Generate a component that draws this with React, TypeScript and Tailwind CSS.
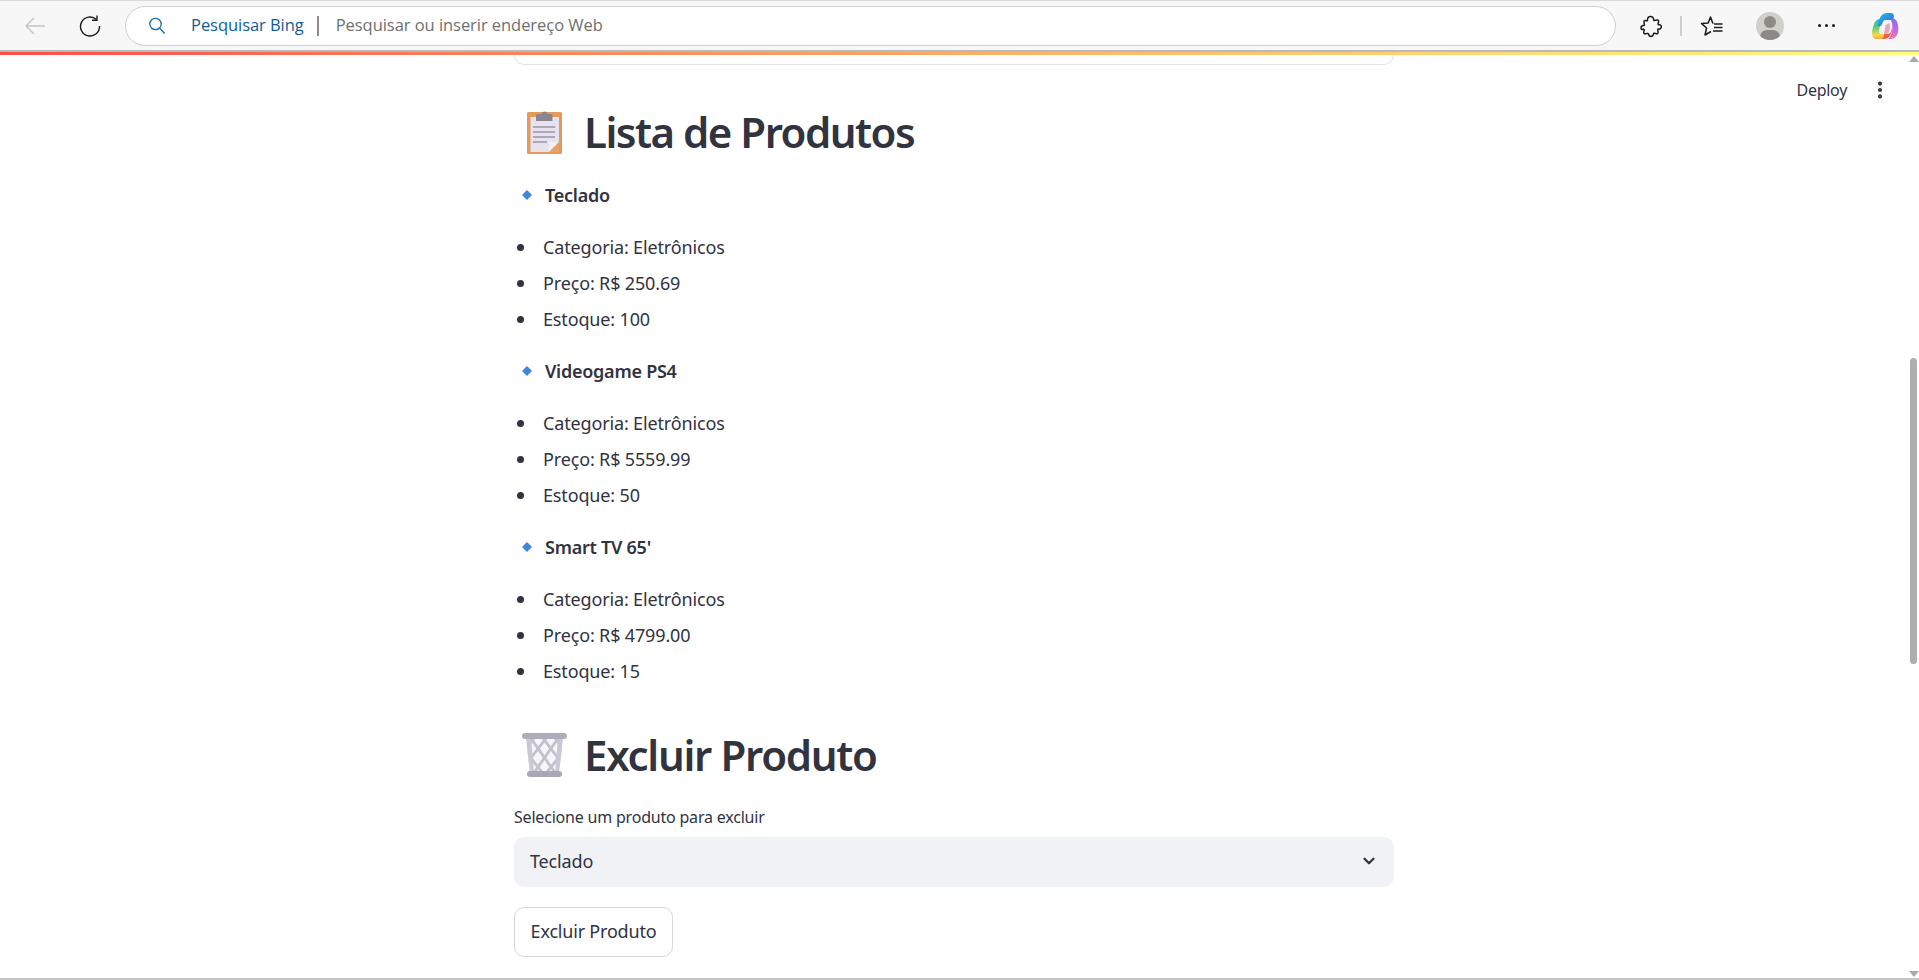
import { ChevronDown, EllipsisVertical } from "lucide-react";

const products = [
  { name: "Teclado", price: "250.69", stock: 100 },
  { name: "Videogame PS4", price: "5559.99", stock: 50 },
  { name: "Smart TV 65'", price: "4799.00", stock: 15 },
];

function BrowserBar() {
  return (
    <div className="flex h-[52px] shrink-0 items-center border-t border-b-2 border-t-[#d9d9d9] border-b-[#b9b9b9] bg-[#f7f7f7] font-['Open_Sans',sans-serif]">
      {/* back + reload */}
      <svg viewBox="0 0 24 24" className="ml-[23px] h-[24px] w-[24px] text-[#c4c4c4]" fill="none" stroke="currentColor" strokeWidth="1.3">
        <path d="M22 12H3M11 4l-8 8 8 8" />
      </svg>
      <svg viewBox="0 0 24 24" className="ml-[31px] h-[24px] w-[24px] text-[#1b1b1b]" fill="none" stroke="currentColor" strokeWidth="1.4">
        <path d="M18.500 5.600A9.500 9.500 0 1 0 21.500 12" />
        <path d="M19 1.500v4.700h-5" />
      </svg>
      {/* address bar */}
      <div className="ml-[23px] flex h-[40px] w-[1491px] items-center rounded-[20px] border border-[#cfcfcf] bg-white">
        <svg viewBox="0 0 20 20" className="ml-[21px] h-[20px] w-[20px] text-[#1c6aa5]" fill="none" stroke="currentColor" strokeWidth="1.3">
          <circle cx="8.500" cy="8" r="5.700" />
          <path d="M12.700 12.200l5 5.300" />
        </svg>
        <span className="ml-[24px] text-[16.5px] tracking-[-0.05px] text-[#0f5c99]">Pesquisar Bing</span>
        <span className="ml-[13px] h-[20px] w-[2px] bg-[#8a8a8a]" />
        <span className="ml-[17px] text-[16.5px] tracking-[-0.05px] text-[#6f6f6f]">Pesquisar ou inserir endereço Web</span>
      </div>
      {/* extensions */}
      <svg viewBox="0 0 24 24" className="ml-[23px] h-[24px] w-[24px] text-[#1b1b1b]" fill="none" stroke="currentColor" strokeWidth="1.500" strokeLinejoin="round">
        <path d="M8.500 6.200C8.200 4 9.600 2.500 11.500 2.500c2 0 3.300 1.400 3.100 3.200-.1.600.3.900.8.800l2.600-.5c1.100-.2 1.800.6 1.600 1.600l-.5 2.300c-.1.600.4 1 .9.900 1.500-.2 2.400.8 2.300 2.100-.1 1.400-1.300 2.300-2.600 2-.7-.1-1.100.3-1 .9l.4 2.400c.2 1-.6 1.700-1.500 1.500l-2.100-.4c-.6-.1-1 .3-1.100.8-.3 1.500-1.300 2.300-2.400 2.300-1.200 0-2.200-.9-2.400-2.200-.1-.6-.6-.9-1.100-.8l-2.200.4c-1 .2-1.700-.6-1.500-1.500l.4-2.200c.1-.6-.3-1-.8-1.100C2.900 16.300 2 15.300 2 14c0-1.400 1-2.400 2.500-2.400.6 0 1-.4.900-1l-.4-2.600c-.2-1 .6-1.700 1.500-1.500l1.300.4c.4.100.7-.2.700-.700z" />
      </svg>
      <span className="ml-[17px] h-[20px] w-[2px] bg-[#cfcfcf]" />
      {/* favourites */}
      <svg viewBox="0 0 24 24" className="ml-[18px] h-[24px] w-[24px] text-[#1b1b1b]" fill="none" stroke="currentColor" strokeWidth="1.500" strokeLinejoin="round">
        <path d="M13.500 9h-.8L10.500 3 8.200 9l-6.600.6 5 4.400L5 21l6-3.500" />
        <path d="M14 10h8.500M14 13.500h8.500M13 17h9.500" />
      </svg>
      {/* profile */}
      <div className="relative ml-[32px] h-[28px] w-[28px] overflow-hidden rounded-full bg-[#d0cfcb]">
        <div className="absolute left-[8px] top-[4px] h-[12px] w-[12px] rounded-full bg-[#8d8a85]" />
        <div className="absolute left-[4px] top-[18px] h-[14px] w-[20px] rounded-full bg-[#8d8a85]" />
      </div>
      <div className="ml-[34px] flex gap-[4px]">
        <span className="h-[3px] w-[3px] rounded-full bg-[#1b1b1b]" />
        <span className="h-[3px] w-[3px] rounded-full bg-[#1b1b1b]" />
        <span className="h-[3px] w-[3px] rounded-full bg-[#1b1b1b]" />
      </div>
      {/* copilot */}
      <svg viewBox="0 0 28 28" className="ml-[36px] h-[28px] w-[28px]">
        <defs>
          <linearGradient id="copA" x1="0" y1="0" x2="1" y2="1">
            <stop offset="0" stopColor="#20c4d8" />
            <stop offset="0.6" stopColor="#2b86ec" />
            <stop offset="1" stopColor="#3a55d8" />
          </linearGradient>
          <linearGradient id="copB" x1="0" y1="0" x2="0" y2="1">
            <stop offset="0" stopColor="#2bb8c8" />
            <stop offset="0.4" stopColor="#58cf78" />
            <stop offset="0.8" stopColor="#f6d84a" />
            <stop offset="1" stopColor="#f8a840" />
          </linearGradient>
          <linearGradient id="copC" x1="0" y1="0" x2="0" y2="1">
            <stop offset="0" stopColor="#8f6cf0" />
            <stop offset="0.6" stopColor="#c868e0" />
            <stop offset="1" stopColor="#f07ab0" />
          </linearGradient>
          <linearGradient id="copD" x1="0" y1="0" x2="1" y2="1">
            <stop offset="0" stopColor="#f8a83c" />
            <stop offset="0.6" stopColor="#f0603c" />
            <stop offset="1" stopColor="#e84a78" />
          </linearGradient>
        </defs>
        <path d="M3 12C4 9 6 7 9 7h2L8 18c-.5 2 .5 4 2 4h5c-1.500 3-3.500 5-7 5H6c-3 0-5-2-5-6 0-3 1-6 2-9z" fill="url(#copB)" />
        <path d="M20 6c4 0 6 2 7 7 1 5 0 14-7 14h-3c2-2 3-4 4-8 1-5 0-10-2.500-13z" fill="url(#copC)" />
        <path d="M8 9c1-5 4-8 8-8h4c2 0 3 1.500 3 4l-2 3h-6c-2 0-3 1-3.500 3L10 14H6.500z" fill="url(#copA)" />
        <path d="M13 22h4c2 0 3-2 3.500-5l.5-1c0 6-3 11-8 11h-3c2-1 3-2.500 3-5z" fill="url(#copD)" />
        <path d="M18.500 11l-4 2-1.500 9h3c2-1 3-4 3-7z" fill="#f2a0c0" />
      </svg>
      <div className="flex-1" />
    </div>
  );
}

function ClipboardEmoji() {
  return (
    <svg viewBox="0 0 35 43" className="h-[43px] w-[35px]">
      <rect x="0" y="1" width="35" height="42" rx="1.500" fill="#e39a5c" />
      <path d="M3.500 6H32v25L22 41H3.500z" fill="#e7e2f1" />
      <path d="M22 41l10-10h-10z" fill="#f3eff8" />
      <path d="M32 31v10H22z" fill="#e8a266" />
      <path d="M9 10V4.500C9 3.500 10 3 11 3h3.500c.5-3.500 5.500-3.500 6 0H24c1 0 1.500.5 1.500 1.500V10z" fill="#8b8590" />
      <path d="M6 16h22M6 21h22M6 26h22M6 31h14" stroke="#9a95a3" strokeWidth="1.500" />
    </svg>
  );
}

function TrashEmoji() {
  return (
    <svg viewBox="0 0 45 44" className="h-[44px] w-[45px]">
      <defs>
        <clipPath id="basket">
          <path d="M4 5h37l-4 35H8z" />
        </clipPath>
      </defs>
      <path d="M4 5h37l-4 35H8z" fill="#f6f5f9" />
      <g clipPath="url(#basket)" stroke="#c4c1cf" strokeWidth="2.800">
        <path d="M0 14L24 44M8 4L36 44M20 4L46 38M32 4L46 22" />
        <path d="M45 14L21 44M37 4L9 44M25 4L-1 38M13 4L-1 22" />
      </g>
      <path d="M4 5h5l3 35H8zM41 5h-5l-3 35h4z" fill="#cbc8d5" />
      <rect x="0" y="0" width="45" height="6" rx="3" fill="#b0adbb" />
      <rect x="5" y="38" width="35" height="6" rx="3" fill="#aaa6b8" />
    </svg>
  );
}

function Product({ name, price, stock }: { name: string; price: string; stock: number }) {
  return (
    <div className="mt-[16px]">
      <div className="flex h-[36px] items-center font-semibold tracking-[-0.25px]">
        <svg viewBox="0 0 10 10" className="ml-[8px] h-[10px] w-[10px]">
          <path d="M5 0l5 5-5 5-5-5z" fill="#3f86e0" />
        </svg>
        <span className="ml-[13px]">{name}</span>
      </div>
      <ul className="mt-[16px]">
        {[`Categoria: Eletrônicos`, `Preço: R$ ${price}`, `Estoque: ${stock}`].map((line) => (
          <li key={line} className="flex h-[36px] items-center">
            <span className="ml-[3px] h-[7px] w-[7px] rounded-full bg-[#31333f]" />
            <span className="ml-[19px]">{line}</span>
          </li>
        ))}
      </ul>
    </div>
  );
}

export default function App() {
  return (
    <div className="flex h-[980px] flex-col overflow-hidden bg-white font-['Noto_Sans',sans-serif] text-[18px] tracking-[-0.15px] text-[#31333f]">
      <BrowserBar />
      <div className="h-[3px] shrink-0 bg-linear-to-r from-[#ff4b4b] to-[#fffd80]" />

      <div className="relative flex min-h-0 flex-1 border-b-2 border-b-[#c4c4c4]">
        <main className="flex-1">
          <div className="mx-auto w-[880px]">
            <div className="h-[10px] rounded-b-[10px] border border-t-0 border-[#e4e4e4]" />

            <div className="mt-[37px] flex h-[60px] items-center gap-[22px] pl-[13px] text-[42px] font-semibold tracking-[-1.5px]">
              <ClipboardEmoji />
              <h2 className="-mt-[2px]">Lista de Produtos</h2>
            </div>

            <div className="-mt-[1px]">
              {products.map((p) => (
                <Product key={p.name} {...p} />
              ))}
            </div>

            <div className="mt-[36px] flex h-[60px] items-center gap-[17px] pl-[8px] text-[42px] font-semibold tracking-[-1.3px]">
              <TrashEmoji />
              <h2 className="-mt-[2px]">Excluir Produto</h2>
            </div>

            <label className="mt-[20px] block h-[24px] text-[16px] leading-[24px] tracking-[-0.2px]">Selecione um produto para excluir</label>
            <div className="mt-[8px] flex h-[50px] items-center justify-between rounded-[10px] bg-[#f0f2f6] pb-[2px] pl-[16px] pr-[16px]">
              <span>Teclado</span>
              <ChevronDown size={18} strokeWidth={3} />
            </div>
            <button className="mt-[20px] h-[50px] w-[159px] rounded-[10px] border border-[#d8d8db] bg-white pb-[2px] tracking-[-0.2px]">Excluir Produto</button>
          </div>
        </main>

        {/* scrollbar */}
        <div className="flex w-[11px] flex-col items-center py-[1px]">
          <div className="h-0 w-0 border-x-[5px] border-b-[6px] border-x-transparent border-b-[#a9a9ae]" />
          <div className="mt-[296px] h-[306px] w-[7px] rounded-full bg-[#adadb2]" />
          <div className="mt-auto h-0 w-0 border-x-[5px] border-t-[6px] border-x-transparent border-t-[#a9a9ae]" />
        </div>

        {/* streamlit header overlay */}
        <div className="absolute right-[28px] top-[23px] flex items-center gap-[22px] text-[16px] tracking-[-0.3px]">
          <span>Deploy</span>
          <EllipsisVertical size={22} strokeWidth={2.5} />
        </div>
      </div>
    </div>
  );
}
